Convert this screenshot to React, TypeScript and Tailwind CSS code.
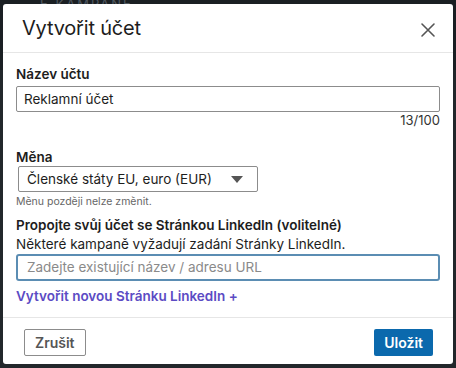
import React from 'react';

const font = { fontFamily: 'Inter, "Liberation Sans", sans-serif' };

export default function App() {
  return (
    <div className="w-[456px] h-[368px] bg-[#22272b] overflow-hidden relative" style={font}>
      {/* dimmed page behind the dialog */}
      <div className="absolute inset-x-0 top-0 h-[70px] bg-[#1a1f23]" />
      <div className="absolute top-[-5px] left-[40px] text-[13px] tracking-[2px] text-[#505860]">E KAMPANĚ</div>

      <div className="absolute left-[3px] top-[4px] w-[450px] h-[360px] bg-white rounded-[3px] flex flex-col">
        <div className="h-[49px] shrink-0 flex items-center justify-between pl-[19px] pr-[17px] border-b border-[#e6e6e6]">
          <h2 className="text-[20px] leading-[24px] text-[#1d1d1d] font-normal tracking-[-0.2px]">Vytvořit účet</h2>
          <svg width="16" height="16" viewBox="0 0 16 16" className="mt-[3px]">
            <path d="M2 2 L14 14 M14 2 L2 14" stroke="#555" strokeWidth="1.6" strokeLinecap="round" />
          </svg>
        </div>

        <div className="flex-1 px-[13px] pt-[11px]">
          <label className="block text-[13.5px] font-semibold text-[#1d1d1d] leading-[20px]">Název účtu</label>
          <div className="mt-[2px] h-[26px] border border-[#8c8c8c] rounded-[2px] flex items-center pl-[7px] text-[13.5px] text-[#1d1d1d]">
            Reklamní účet
          </div>
          <div className="text-right text-[13px] text-[#333] leading-[16px]">13/100</div>

          <label className="block mt-[20px] text-[13.5px] font-semibold text-[#1d1d1d] leading-[18px]">Měna</label>
          <div className="ml-[2px] w-[240px] h-[26px] border border-[#8c8c8c] rounded-[2px] flex items-center justify-between pl-[8px] pr-[14px] text-[13.5px] text-[#1d1d1d]">
            <span>Členské státy EU, euro (EUR)</span>
            <svg width="12" height="7" viewBox="0 0 12 7"><path d="M0 0 H12 L6 7 Z" fill="#555" /></svg>
          </div>
          <div className="mt-[2px] text-[10.5px] text-[#666] leading-[15px]">Měnu později nelze změnit.</div>

          <div className="mt-[6px] text-[13.5px] font-semibold text-[#1d1d1d] leading-[20px]">Propojte svůj účet se Stránkou LinkedIn (volitelné)</div>
          <div className="text-[13.5px] text-[#1d1d1d] leading-[18px]">Některé kampaně vyžadují zadání Stránky LinkedIn.</div>
          <div className="mt-[1px] h-[27px] border-2 border-[#5b8db3] rounded-[3px] flex items-center pl-[9px] text-[13.5px] text-[#8a8a8a]">
            Zadejte existující název / adresu URL
          </div>
          <div className="mt-[5px] text-[13.5px] font-semibold text-[#5b4bc4] leading-[20px]">Vytvořit novou Stránku LinkedIn +</div>
        </div>

        <div className="h-[47px] shrink-0 border-t border-[#e6e6e6] flex items-center justify-between pl-[21px] pr-[20px] pt-[3px]">
          <button className="h-[27px] px-[10px] border border-[#8c8c8c] rounded-[2px] text-[14px] font-semibold text-[#555]">Zrušit</button>
          <button className="h-[27px] px-[10px] bg-[#0b69ad] rounded-[2px] text-[14px] font-semibold text-white">Uložit</button>
        </div>
      </div>
    </div>
  );
}
